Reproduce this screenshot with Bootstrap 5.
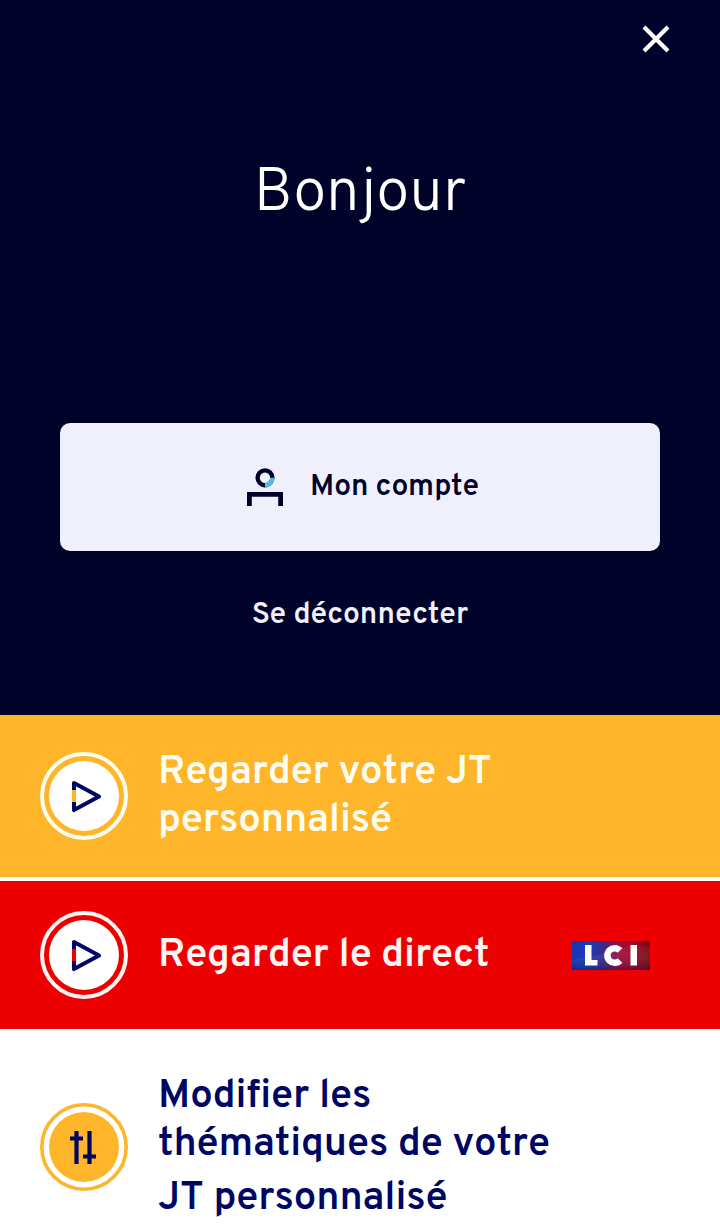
<!DOCTYPE html>
<html lang="fr">
<head>
<meta charset="utf-8">
<meta name="viewport" content="width=device-width, initial-scale=1">
<title>Mon compte</title>
<link href="https://cdn.jsdelivr.net/npm/bootstrap@5.3.0/dist/css/bootstrap.min.css" rel="stylesheet">
<style>
body{font-family:Overpass,Roboto,"Liberation Sans",sans-serif;background:#fff;height:1227px;overflow:hidden}
.panel{background:#000229;height:715px;padding:0 60px}
.close-x{height:78px;padding:0;margin-right:-10px;border:0;background:none;line-height:0}
.hello{font-size:60px;font-weight:300;line-height:72px;margin-top:81px;letter-spacing:-.1px}
.account{height:128px;margin-top:192px;border-radius:10px;background:#f0f0fd;color:#000229;font-size:30px;font-weight:600;gap:27px;padding-left:18px;letter-spacing:-.05px}
.account:hover{background:#f0f0fd;color:#000229}
.logout{color:#f0f0fd;font-size:30px;font-weight:600;line-height:40px;margin-top:45px}
.action{padding:0 70px 0 40px;gap:30px;font-size:40px;font-weight:600;line-height:48px;font-kerning:none;letter-spacing:-.1px;text-decoration:none;white-space:nowrap}
.action svg{flex:none}
.jt{height:162px;background:#ffb529;color:#fffdf0}
.live{height:148px;margin-top:4px;background:#ed0000;color:#fff5f5}
.jt span,.live span{padding-top:2px}
.themes{height:198px;padding-top:38px;color:#000663}
.themes svg{margin-top:36px}
.words{padding-top:6px}
.last-line{line-height:60px}
</style>
</head>
<body>
<header class="panel d-flex flex-column">
  <button class="close-x align-self-end" aria-label="Fermer">
    <svg width="28" height="28" viewBox="0 0 28 28" stroke="#fff" stroke-width="4.200"><path d="M2 2 26 26M26 2 2 26"/></svg>
  </button>
  <h1 class="hello text-white text-center mb-0">Bonjour</h1>
  <a href="#" class="account btn border-0 d-flex align-items-center justify-content-center">
    <svg width="36" height="38" viewBox="0 0 36 38" fill="none">
      <circle cx="18" cy="9.800" r="7.400" stroke="#000229" stroke-width="4.400"/>
      <path d="M25.400 9.800A7.400 7.400 0 0 1 18 17.200" stroke="#52baf2" stroke-width="4.400"/>
      <path d="M2.400 38V26.300H33.600V38" stroke="#000229" stroke-width="4.800"/>
    </svg>
    <span>Mon compte</span>
  </a>
  <a href="#" class="logout text-center text-decoration-none">Se déconnecter</a>
</header>
<main>
  <a href="#" class="action jt d-flex align-items-center">
    <svg width="88" height="88" viewBox="0 0 88 88" fill="none">
      <circle cx="44" cy="44" r="42" stroke="#fffdf0" stroke-width="4"/>
      <circle cx="44" cy="44" r="35" fill="#fff"/>
      <path d="M34 38V31L59 44.500 34 58V50" stroke="#000663" stroke-width="4.100" stroke-linejoin="round"/>
      <path d="M34 38V50" stroke="#ffb529" stroke-width="4.100"/>
    </svg>
    <span>Regarder votre JT<br>personnalisé</span>
  </a>
  <a href="#" class="action live d-flex align-items-center">
    <svg width="88" height="88" viewBox="0 0 88 88" fill="none">
      <circle cx="44" cy="44" r="42" stroke="#fff5f5" stroke-width="4"/>
      <circle cx="44" cy="44" r="35" fill="#fff"/>
      <path d="M34 38V31L59 44.500 34 58V50" stroke="#000663" stroke-width="4.100" stroke-linejoin="round"/>
      <path d="M34 38V50" stroke="#ed0000" stroke-width="4.100"/>
    </svg>
    <span>Regarder le direct</span>
    <svg class="ms-auto" width="78" height="29" viewBox="0 0 78 29" role="img" aria-label="LCI">
      <defs>
        <linearGradient id="lci"><stop stop-color="#1735b4"/><stop offset=".22" stop-color="#1a3bbd"/><stop offset=".42" stop-color="#3d2a80"/><stop offset=".6" stop-color="#a30a3c"/><stop offset=".75" stop-color="#a50929"/><stop offset="1" stop-color="#79090f"/></linearGradient>
        <linearGradient id="shade" x2="0" y2="1"><stop stop-color="#fff" stop-opacity=".02"/><stop offset="1" stop-color="#000040" stop-opacity=".28"/></linearGradient>
      </defs>
      <path fill="url(#lci)" d="M0 0H78V29H0z"/>
      <path fill="url(#shade)" d="M0 19Q30 14 45 8T78 6V29H0z"/>
      <path fill="#fff" d="M13 4H19.500V19H25.500V24.500H13zM58.500 4H65V24.500H58.500z"/>
      <path d="M48 9.500A7.300 7.300 0 1 0 48 19.500" fill="none" stroke="#fff" stroke-width="6.500"/>
    </svg>
  </a>
  <a href="#" class="action themes d-flex align-items-start">
    <svg width="88" height="88" viewBox="0 0 88 88" fill="none">
      <circle cx="44" cy="44" r="42.200" stroke="#ffb529" stroke-width="3.600"/>
      <circle cx="44" cy="44" r="35" fill="#ffb529"/>
      <path d="M36.500 28V61M49.500 28V61M30 35.500H43M43 53.500H56" stroke="#000663" stroke-width="4.200"/>
    </svg>
    <span class="words">Modifier les<br>thématiques de votre<span class="d-block last-line">JT personnalisé</span></span>
  </a>
</main>
<script src="https://cdn.jsdelivr.net/npm/bootstrap@5.3.0/dist/js/bootstrap.bundle.min.js"></script>
</body>
</html>
